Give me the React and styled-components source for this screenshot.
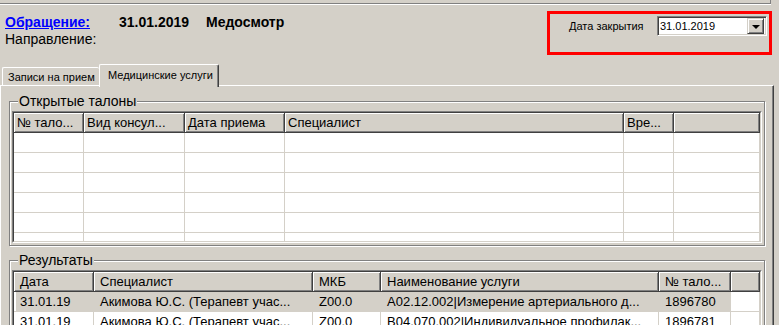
import React from "react";
import styled, { createGlobalStyle } from "styled-components";

const GlobalStyle = createGlobalStyle`
  html, body {
    margin: 0;
    padding: 0;
    background: #d4d0c8;
  }
  body {
    font-family: "Liberation Sans", Arial, sans-serif;
    color: #000;
  }
`;

const Window = styled.div`
  width: 779px;
  height: 325px;
  overflow: hidden;
  background: #d4d0c8;
`;

const TopStrip = styled.div`
  width: 770px;
  height: 3px;
  border-right: 1px solid #808080;
  border-bottom: 1px solid #808080;
  box-shadow: 0 1px 0 #fff;
`;

const Header = styled.div`
  display: flex;
  justify-content: space-between;
  align-items: flex-start;
  height: 60px;
`;

const Info = styled.div`
  padding: 10px 0 0 5px;
  font-size: 14px;
  line-height: 17px;
`;

const InfoRow = styled.div`
  display: grid;
  grid-template-columns: 114px 87px auto;
  white-space: nowrap;
`;

const CaseLink = styled.a`
  color: #0000ff;
  font-weight: bold;
  text-decoration: underline;
  cursor: pointer;
`;

const Strong = styled.span`
  font-weight: bold;
`;

const CloseBox = styled.div`
  box-sizing: border-box;
  width: 225px;
  height: 44px;
  margin: 7px 7px 0 0;
  border: 3px solid #ff0000;
  padding: 2px 2px 0 19px;
`;

const CloseRow = styled.div`
  display: flex;
  align-items: center;
  height: 20px;
  font-size: 11px;
`;

const Combo = styled.div`
  box-sizing: border-box;
  width: 110px;
  height: 20px;
  margin-left: auto;
  background: #fff;
  border: 1px solid;
  border-color: #808080 #fff #fff #808080;
  box-shadow: inset 1px 1px 0 #404040, inset -1px -1px 0 #d4d0c8;
  display: flex;
  align-items: center;
  padding: 0 2px 0 2px;
  font-size: 11px;
`;

const DropButton = styled.div`
  box-sizing: border-box;
  margin-left: auto;
  width: 17px;
  height: 16px;
  background: #d4d0c8;
  border: 1px solid;
  border-color: #d4d0c8 #404040 #404040 #d4d0c8;
  box-shadow: inset 1px 1px 0 #fff, inset -1px -1px 0 #808080;
  display: flex;
  align-items: center;
  justify-content: center;
`;

const Arrow = styled.span`
  width: 0;
  height: 0;
  margin-top: 1px;
  border-left: 4px solid transparent;
  border-right: 4px solid transparent;
  border-top: 4px solid #000;
`;

const TabRow = styled.div`
  display: flex;
  align-items: flex-end;
  height: 21px;
  padding-left: 2px;
  position: relative;
  z-index: 1;
`;

const Tab = styled.div`
  box-sizing: border-box;
  width: ${(p) => p.$w}px;
  height: ${(p) => (p.$active ? 23 : 18)}px;
  margin-bottom: ${(p) => (p.$active ? -2 : 0)}px;
  padding: ${(p) => (p.$active ? "0 0 3px 8px" : "0 0 0 5px")};
  background: #d4d0c8;
  border-top: 1px solid #fff;
  border-left: 1px solid #fff;
  border-right: ${(p) => (p.$active ? "1px solid #404040" : "none")};
  box-shadow: ${(p) => (p.$active ? "inset -1px 0 0 #808080" : "none")};
  border-radius: 2px 2px 0 0;
  font-size: 11px;
  display: flex;
  align-items: center;
  white-space: nowrap;
`;

const Panel = styled.div`
  box-sizing: border-box;
  width: 774px;
  height: 240px;
  border-top: 1px solid #fff;
  border-left: 1px solid #fff;
  border-right: 1px solid #404040;
  box-shadow: inset -1px 0 0 #808080;
  padding: 8px 8px 0 8px;
  display: flex;
  flex-direction: column;
  gap: 7px;
`;

const Group = styled.fieldset`
  margin: 0;
  padding: 2px 2px 2px 2px;
  min-width: 0;
  border: 1px solid #808080;
  box-shadow: inset 1px 1px 0 #fff, 1px 1px 0 #fff;
`;

const Legend = styled.legend`
  margin-left: 6px;
  padding: 0 1px;
  font-size: 14px;
  line-height: 15px;
  background: #d4d0c8;
`;

const GridFrame = styled.div`
  border: 1px solid;
  border-color: #808080 #fff #fff #808080;
`;

const GridInner = styled.div`
  box-sizing: border-box;
  height: ${(p) => p.$h}px;
  border: 1px solid;
  border-color: #404040 #d4d0c8 #d4d0c8 #404040;
  background: #fff;
  overflow: hidden;
`;

const Table = styled.table`
  border-collapse: separate;
  border-spacing: 0;
  table-layout: fixed;
  width: 100%;
  font-size: 13px;
`;

const Th = styled.th`
  box-sizing: border-box;
  height: 20px;
  padding: 0 0 0 ${(p) => p.$pad}px;
  text-align: left;
  font-weight: normal;
  background: #d4d0c8;
  border-right: 1px solid #404040;
  border-bottom: 1px solid #404040;
  box-shadow: inset 1px 1px 0 #fff, inset -1px -1px 0 #808080;
  white-space: nowrap;
  overflow: hidden;
`;

const Td = styled.td`
  box-sizing: border-box;
  height: 20px;
  padding: 0 0 0 ${(p) => p.$pad}px;
  background: ${(p) => (p.$sel ? "#d4d0c8" : "#fff")};
  box-shadow: ${(p) => (p.$edge ? "inset 2px 0 0 #fff" : "none")};
  border-right: 1px solid #d4d0c8;
  border-bottom: 1px solid #d4d0c8;
  white-space: nowrap;
  overflow: hidden;
`;

const ticketCols = [
  { w: 70, title: "№ тало..." },
  { w: 101, title: "Вид консул..." },
  { w: 100, title: "Дата приема" },
  { w: 339, title: "Специалист" },
  { w: 50, title: "Вре..." },
  { w: 86, title: "" },
];

const resultCols = [
  { w: 80, title: "Дата" },
  { w: 219, title: "Специалист" },
  { w: 68, title: "МКБ" },
  { w: 278, title: "Наименование услуги" },
  { w: 72, title: "№ тало..." },
  { w: 29, title: "" },
];

const results = [
  ["31.01.19", "Акимова Ю.С. (Терапевт учас...", "Z00.0", "A02.12.002|Измерение артериального д...", "1896780"],
  ["31.01.19", "Акимова Ю.С. (Терапевт учас...", "Z00.0", "B04.070.002|Индивидуальное профилак...", "1896781"],
];

function Grid({ cols, rows, height, pad, selected }) {
  return (
    <GridFrame>
      <GridInner $h={height}>
        <Table>
          <colgroup>
            {cols.map((c, i) => (
              <col key={i} style={{ width: c.w }} />
            ))}
          </colgroup>
          <thead>
            <tr>
              {cols.map((c, i) => (
                <Th key={i} $pad={pad}>{c.title}</Th>
              ))}
            </tr>
          </thead>
          <tbody>
            {rows.map((r, ri) => (
              <tr key={ri}>
                {cols.map((c, ci) => {
                  const isSel = ri === selected && ci < cols.length - 1;
                  return (
                    <Td key={ci} $pad={pad} $sel={isSel} $edge={isSel && ci === 0}>
                      {r[ci] || ""}
                    </Td>
                  );
                })}
              </tr>
            ))}
          </tbody>
        </Table>
      </GridInner>
    </GridFrame>
  );
}

export default function App() {
  const emptyRows = Array.from({ length: 6 }, () => []);
  return (
    <Window>
      <GlobalStyle />
      <TopStrip />
      <Header>
        <Info>
          <InfoRow>
            <span>
              <CaseLink>Обращение:</CaseLink>
            </span>
            <Strong>31.01.2019</Strong>
            <Strong>Медосмотр</Strong>
          </InfoRow>
          <div>Направление:</div>
        </Info>
        <CloseBox>
          <CloseRow>
            <span>Дата закрытия</span>
            <Combo>
              <span>31.01.2019</span>
              <DropButton>
                <Arrow />
              </DropButton>
            </Combo>
          </CloseRow>
        </CloseBox>
      </Header>
      <TabRow>
        <Tab $w={97}>Записи на прием</Tab>
        <Tab $w={120} $active>
          Медицинские услуги
        </Tab>
      </TabRow>
      <Panel>
        <Group>
          <Legend>Открытые талоны</Legend>
          <Grid cols={ticketCols} rows={emptyRows} height={130} pad={3} />
        </Group>
        <Group>
          <Legend>Результаты</Legend>
          <Grid cols={resultCols} rows={results} height={80} pad={6} selected={0} />
        </Group>
      </Panel>
    </Window>
  );
}
